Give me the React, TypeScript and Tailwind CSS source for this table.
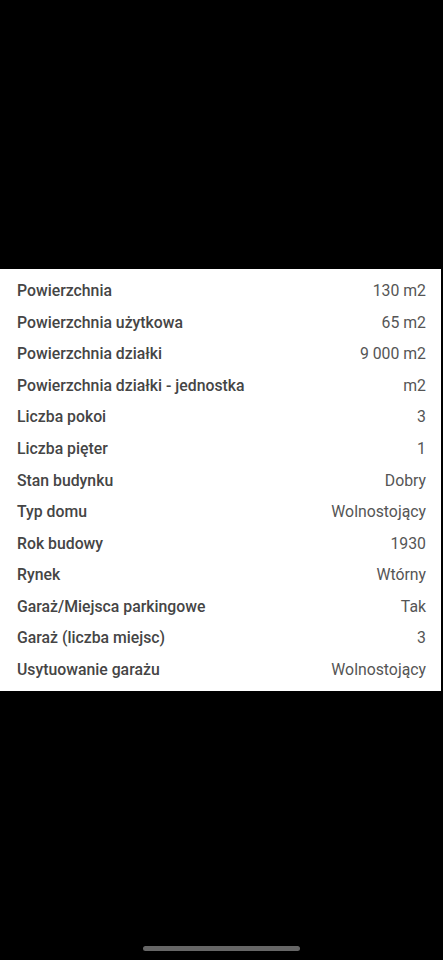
const rows: [string, string][] = [
  ['Powierzchnia', '130 m2'],
  ['Powierzchnia użytkowa', '65 m2'],
  ['Powierzchnia działki', '9 000 m2'],
  ['Powierzchnia działki - jednostka', 'm2'],
  ['Liczba pokoi', '3'],
  ['Liczba pięter', '1'],
  ['Stan budynku', 'Dobry'],
  ['Typ domu', 'Wolnostojący'],
  ['Rok budowy', '1930'],
  ['Rynek', 'Wtórny'],
  ['Garaż/Miejsca parkingowe', 'Tak'],
  ['Garaż (liczba miejsc)', '3'],
  ['Usytuowanie garażu', 'Wolnostojący'],
]

export default function App() {
  return (
    <div className="w-[443px] h-[960px] bg-black flex flex-col font-['Roboto',sans-serif]">
      <div className="h-[269px] shrink-0" />
      <div className="w-[441px] bg-white pt-[6px] pb-[5px]">
        {rows.map(([label, value]) => (
          <div key={label} className="h-[31.6px] pl-[17px] pr-[15px] flex items-center justify-between text-[15.8px]">
            <span className="font-medium text-[#454545]">{label}</span>
            <span className="text-[#555555]">{value}</span>
          </div>
        ))}
      </div>
      <div className="flex-1 flex flex-col justify-end items-center pb-[9px]">
        <div className="w-[157px] h-[5px] rounded-full bg-[#666666]" />
      </div>
    </div>
  )
}
